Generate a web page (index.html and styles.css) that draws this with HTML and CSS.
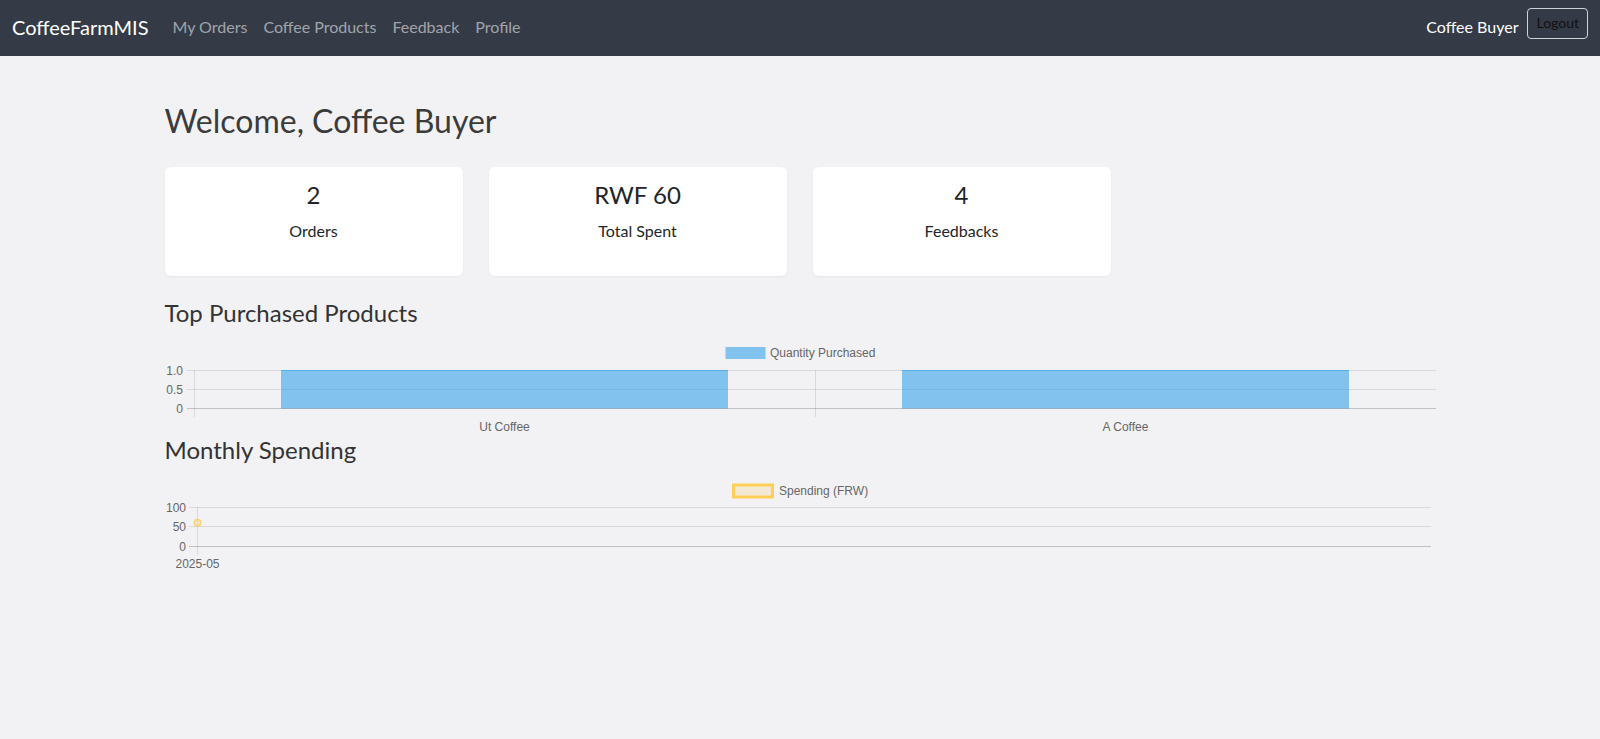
FILE: index.html
```html
<!DOCTYPE html>
<html lang="en">
<head>
<meta charset="utf-8">
<title>CoffeeFarmMIS</title>
<link rel="stylesheet" href="styles.css">
</head>
<body>
<nav class="navbar">
  <a class="brand" href="#">CoffeeFarmMIS</a>
  <ul class="nav-links">
    <li><a href="#">My Orders</a></li>
    <li><a href="#">Coffee Products</a></li>
    <li><a href="#">Feedback</a></li>
    <li><a href="#">Profile</a></li>
  </ul>
  <div class="nav-user">
    <span class="user-name">Coffee Buyer</span>
    <button class="logout" type="button">Logout</button>
  </div>
</nav>

<main class="container">
  <h2 class="welcome">Welcome, Coffee Buyer</h2>

  <div class="stats">
    <div class="stat-card">
      <div class="stat-value">2</div>
      <div class="stat-label">Orders</div>
    </div>
    <div class="stat-card">
      <div class="stat-value">RWF 60</div>
      <div class="stat-label">Total Spent</div>
    </div>
    <div class="stat-card">
      <div class="stat-value">4</div>
      <div class="stat-label">Feedbacks</div>
    </div>
  </div>

  <h4 class="section-title">Top Purchased Products</h4>
  <svg class="chart chart-bar" width="1271" height="108" viewBox="0 0 1271 108" xmlns="http://www.w3.org/2000/svg">
    <rect x="560.5" y="20" width="40" height="12" fill="rgba(54,162,235,0.6)"/>
    <text x="605" y="30.3" class="chart-text">Quantity Purchased</text>
    <g class="grid">
      <line x1="22" y1="43.5" x2="1271" y2="43.5"/>
      <line x1="22" y1="62.5" x2="1271" y2="62.5"/>
      <line x1="29.5" y1="43" x2="29.5" y2="90"/>
      <line x1="650.5" y1="43" x2="650.5" y2="90"/>
    </g>
    <rect x="116" y="43" width="447" height="38.5" fill="rgba(54,162,235,0.6)"/>
    <rect x="737" y="43" width="447" height="38.5" fill="rgba(54,162,235,0.6)"/>
    <line x1="116" y1="43.5" x2="563" y2="43.5" class="bar-edge"/>
    <line x1="737" y1="43.5" x2="1184" y2="43.5" class="bar-edge"/>
    <line x1="22" y1="81.5" x2="1271" y2="81.5" class="zero"/>
    <text x="18" y="47.5" class="chart-text" text-anchor="end">1.0</text>
    <text x="18" y="66.5" class="chart-text" text-anchor="end">0.5</text>
    <text x="18" y="85.5" class="chart-text" text-anchor="end">0</text>
    <text x="339.5" y="103.5" class="chart-text" text-anchor="middle">Ut Coffee</text>
    <text x="960.5" y="103.5" class="chart-text" text-anchor="middle">A Coffee</text>
  </svg>

  <h4 class="section-title section-title-tight">Monthly Spending</h4>
  <svg class="chart chart-line" width="1271" height="110" viewBox="0 0 1271 110" xmlns="http://www.w3.org/2000/svg">
    <rect x="568.5" y="21" width="39" height="12" fill="rgba(255,206,86,0.2)" stroke="#ffce56" stroke-width="3"/>
    <text x="614" y="31" class="chart-text">Spending (FRW)</text>
    <g class="grid">
      <line x1="24" y1="43.5" x2="1266" y2="43.5"/>
      <line x1="24" y1="62.5" x2="1266" y2="62.5"/>
      <line x1="32.5" y1="43" x2="32.5" y2="91"/>
    </g>
    <line x1="24" y1="82.5" x2="1266" y2="82.5" class="zero"/>
    <circle cx="32.5" cy="58.7" r="3.2" fill="rgba(255,206,86,0.2)" stroke="rgba(255,206,86,0.85)" stroke-width="1.5"/>
    <text x="21" y="47.5" class="chart-text" text-anchor="end">100</text>
    <text x="21" y="66.5" class="chart-text" text-anchor="end">50</text>
    <text x="21" y="86.5" class="chart-text" text-anchor="end">0</text>
    <text x="32.5" y="104" class="chart-text" text-anchor="middle">2025-05</text>
  </svg>
</main>
</body>
</html>
```

FILE: styles.css
```css
* {
  box-sizing: border-box;
}

html, body {
  margin: 0;
  padding: 0;
}

body {
  background: #f2f2f4;
  font-family: Lato, "Noto Sans", "Liberation Sans", sans-serif;
  color: #212529;
  font-size: 16px;
  line-height: 1.5;
  min-height: 739px;
}

.navbar {
  height: 56px;
  background: #343a46;
  display: flex;
  align-items: center;
  padding: 0 12px 2px;
}

.brand {
  color: #ffffff;
  font-size: 20px;
  line-height: 30px;
  text-decoration: none;
  margin-right: 16px;
}

.nav-links {
  list-style: none;
  margin: 0;
  padding: 0;
  display: flex;
}

.nav-links a {
  display: block;
  padding: 8px;
  color: rgba(255, 255, 255, 0.55);
  text-decoration: none;
  font-size: 16px;
  line-height: 24px;
}

.nav-user {
  margin-left: auto;
  align-self: flex-start;
  display: flex;
  align-items: flex-start;
  padding-top: 8px;
}

.user-name {
  color: #ffffff;
  font-size: 16px;
  line-height: 24px;
  margin-top: 7px;
  margin-right: 9px;
}

.logout {
  font-family: Lato, "Noto Sans", "Liberation Sans", sans-serif;
  font-size: 14px;
  line-height: 21px;
  padding: 3px 8px 5px;
  height: 31px;
  background: transparent;
  color: #111111;
  border: 1px solid #cfd2d6;
  border-radius: 4px;
}

.container {
  width: 1271px;
  margin: 0 auto;
  padding-top: 46px;
}

.welcome {
  margin: 0 0 27px;
  font-size: 32px;
  line-height: 38px;
  font-weight: 400;
  color: #3b3b3b;
}

.stats {
  display: grid;
  grid-template-columns: repeat(4, 298px);
  column-gap: 26px;
}

.stat-card {
  background: #ffffff;
  border-radius: 6px;
  height: 109px;
  padding-top: 14px;
  text-align: center;
  box-shadow: 0 1px 3px rgba(0, 0, 0, 0.05);
}

.stat-value {
  font-size: 24px;
  line-height: 28px;
  color: #212529;
}

.stat-label {
  margin-top: 10px;
  font-size: 16px;
  line-height: 24px;
  color: #212529;
}

.section-title {
  margin: 22px 0 0;
  font-size: 24px;
  line-height: 29px;
  font-weight: 400;
  color: #333333;
}

.section-title-tight {
  margin-top: 0;
}

.chart {
  display: block;
}

.chart-text {
  font-family: "Liberation Sans", Arial, sans-serif;
  font-size: 12px;
  fill: #666666;
}

.grid line {
  stroke: rgba(0, 0, 0, 0.1);
  stroke-width: 1;
}

.zero {
  stroke: rgba(0, 0, 0, 0.2);
  stroke-width: 1;
}

.bar-edge {
  stroke: rgba(54, 162, 235, 0.5);
  stroke-width: 1;
}
```
